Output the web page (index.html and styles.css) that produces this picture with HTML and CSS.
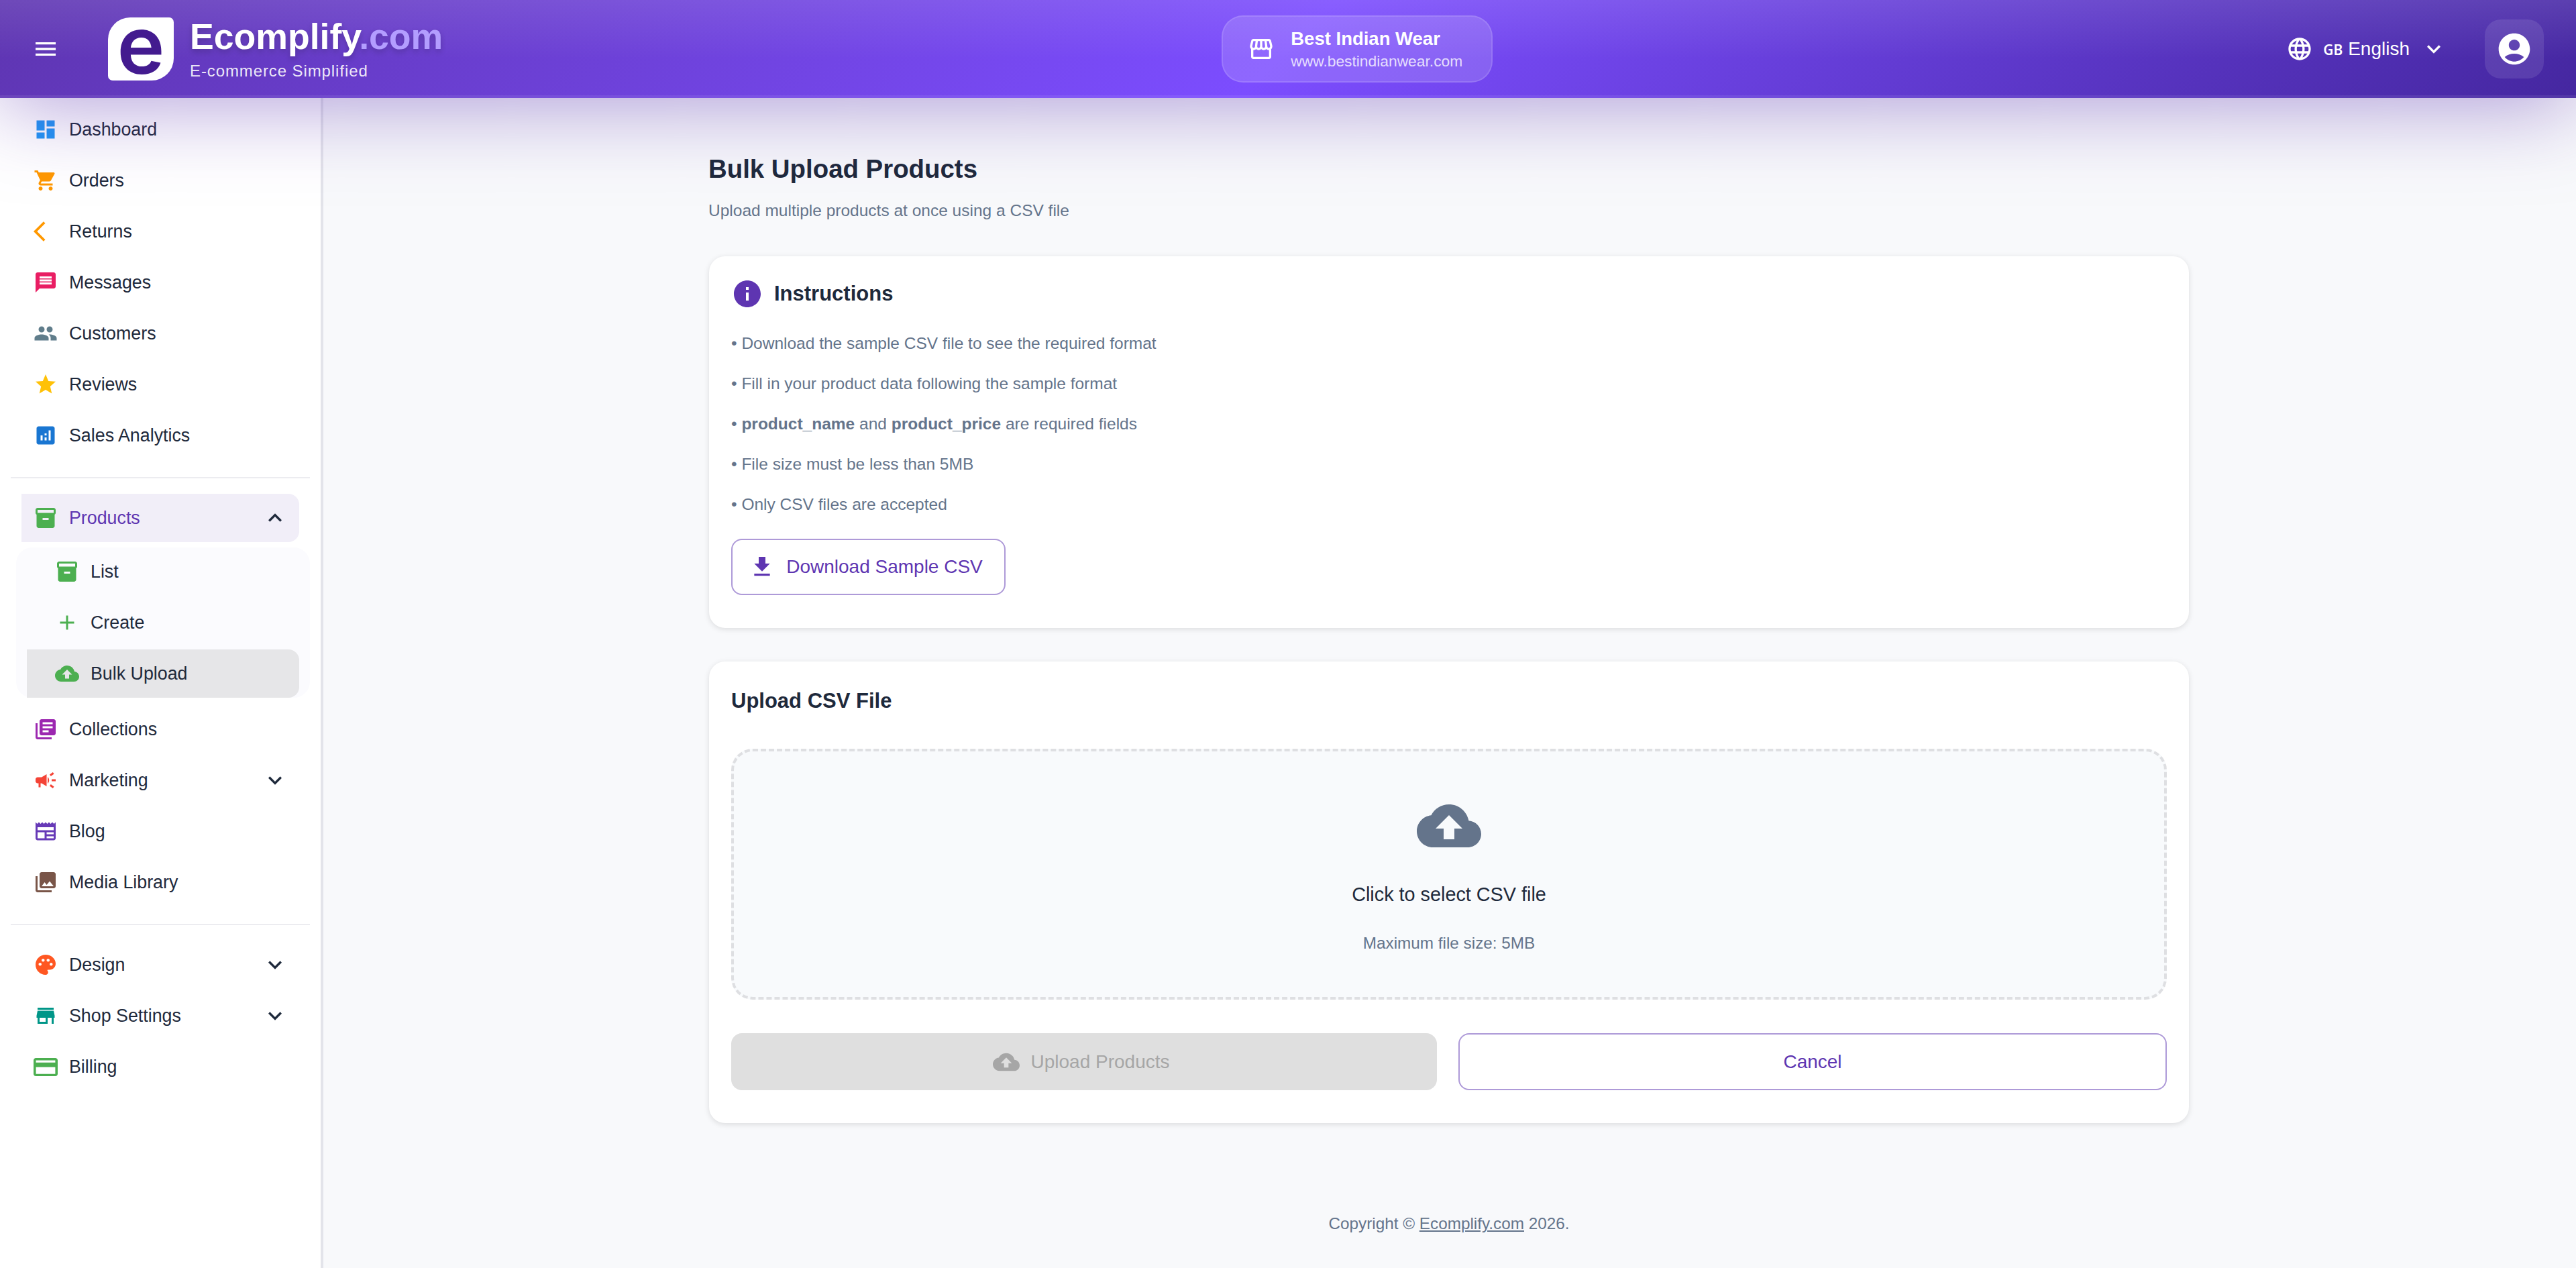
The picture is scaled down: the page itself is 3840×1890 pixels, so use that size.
FILE: index.html
```html
<!DOCTYPE html>
<html lang="en">
<head>
  <meta charset="UTF-8">
  <title>Bulk Upload Products</title>
  <link rel="stylesheet" href="styles.css">
</head>
<body>
  <header class="topbar">
    <div class="brand">
      <svg class="icon menu-btn" viewBox="0 0 24 24"><path d="M3 18h18v-2H3v2zm0-5h18v-2H3v2zm0-7v2h18V6H3z"/></svg>
      <div class="logo"><span class="logo-letter">e</span></div>
      <div class="brand-text">
        <div class="brand-name">Ecomplify<span class="brand-tld">.com</span></div>
        <div class="brand-tag">E-commerce Simplified</div>
      </div>
    </div>

    <div class="shop-pill">
      <svg class="icon" viewBox="0 0 24 24"><path d="M21.9 8.89l-1.05-4.37c-.22-.9-1-1.52-1.91-1.52H5.05c-.9 0-1.69.63-1.9 1.52L2.1 8.89c-.24 1.02-.02 2.06.62 2.88.08.11.19.19.28.29V19c0 1.1.9 2 2 2h14c1.1 0 2-.9 2-2v-6.94c.09-.09.2-.18.28-.28.64-.82.87-1.87.62-2.89zm-2.99-3.9 1.05 4.37c.1.42.01.84-.25 1.17-.14.18-.44.47-.94.47-.61 0-1.14-.49-1.21-1.14L16.98 5l1.93-.01zM13 5h1.96l.54 4.52c.05.39-.07.78-.33 1.07-.22.26-.54.41-.95.41-.67 0-1.22-.59-1.22-1.31V5zM8.49 9.52 9.04 5H11v4.69c0 .72-.55 1.31-1.29 1.31-.34 0-.65-.15-.89-.41-.25-.29-.37-.68-.33-1.07zm-4.45-.16L5.05 5h1.97l-.58 4.86c-.08.65-.6 1.14-1.21 1.14-.49 0-.8-.29-.93-.47-.27-.32-.36-.75-.26-1.17zM5 19v-6.03c.08.01.15.03.23.03.87 0 1.66-.36 2.24-.95.6.6 1.4.95 2.31.95.87 0 1.65-.36 2.23-.93.59.57 1.39.93 2.29.93.84 0 1.64-.35 2.24-.95.58.59 1.37.95 2.24.95.08 0 .15-.02.23-.03V19H5z"/></svg>
      <div>
        <div class="shop-name">Best Indian Wear</div>
        <div class="shop-url">www.bestindianwear.com</div>
      </div>
    </div>

    <div class="top-actions">
      <svg class="icon" viewBox="0 0 24 24"><path d="M11.99 2C6.47 2 2 6.48 2 12s4.47 10 9.99 10C17.52 22 22 17.52 22 12S17.52 2 11.99 2zm6.93 6h-2.95c-.32-1.25-.78-2.45-1.38-3.56 1.84.63 3.37 1.91 4.33 3.56zM12 4.04c.83 1.2 1.48 2.53 1.91 3.96h-3.82c.43-1.43 1.08-2.76 1.91-3.96zM4.26 14C4.1 13.36 4 12.69 4 12s.1-1.36.26-2h3.38c-.08.66-.14 1.32-.14 2 0 .68.06 1.34.14 2H4.26zm.82 2h2.95c.32 1.25.78 2.45 1.38 3.56-1.84-.63-3.37-1.9-4.33-3.56zm2.95-8H5.08c.96-1.66 2.49-2.93 4.33-3.56C8.81 5.55 8.35 6.75 8.03 8zM12 19.96c-.83-1.2-1.48-2.53-1.91-3.96h3.82c-.43 1.43-1.08 2.76-1.91 3.96zM14.34 14H9.66c-.09-.66-.16-1.32-.16-2 0-.68.07-1.35.16-2h4.68c.09.65.16 1.32.16 2 0 .68-.07 1.34-.16 2zm.25 5.56c.6-1.11 1.06-2.31 1.38-3.56h2.95c-.96 1.65-2.49 2.93-4.33 3.56zM16.36 14c.08-.66.14-1.32.14-2 0-.68-.06-1.34-.14-2h3.38c.16.64.26 1.31.26 2s-.1 1.36-.26 2h-3.38z"/></svg>
      <div class="lang"><span class="lang-code">GB</span> English</div>
      <svg class="icon" viewBox="0 0 24 24"><path d="M16.59 8.59 12 13.17 7.41 8.59 6 10l6 6 6-6z"/></svg>
      <div class="avatar">
        <svg class="avatar-icon" viewBox="0 0 24 24"><path d="M12 2C6.48 2 2 6.48 2 12s4.48 10 10 10 10-4.48 10-10S17.52 2 12 2zm0 4c1.93 0 3.5 1.57 3.5 3.5S13.93 13 12 13s-3.5-1.57-3.5-3.5S10.07 6 12 6zm0 14c-2.03 0-4.43-.82-6.14-2.88C7.55 15.8 9.68 15 12 15s4.45.8 6.14 2.12C16.43 19.18 14.03 20 12 20z"/></svg>
      </div>
    </div>
  </header>

  <div class="layout">
    <nav class="sidebar">
      <div class="nav-group">
        <a class="nav-item"><svg class="nav-icon c-blue" viewBox="0 0 24 24"><path d="M3 13h8V3H3v10zm0 8h8v-6H3v6zm10 0h8V11h-8v10zm0-18v6h8V3h-8z"/></svg>Dashboard</a>
        <a class="nav-item"><svg class="nav-icon c-orange" viewBox="0 0 24 24"><path d="M7 18c-1.1 0-1.99.9-1.99 2S5.9 22 7 22s2-.9 2-2-.9-2-2-2zM1 2v2h2l3.6 7.59-1.35 2.45c-.16.28-.25.61-.25.96 0 1.1.9 2 2 2h12v-2H7.42c-.14 0-.25-.11-.25-.25l.03-.12.9-1.63h7.45c.75 0 1.41-.41 1.75-1.03l3.58-6.47c.08-.14.12-.31.12-.48 0-.55-.45-1-1-1H5.21l-.94-2H1zm16 16c-1.1 0-1.99.9-1.99 2s.89 2 1.99 2 2-.9 2-2-.9-2-2-2z"/></svg>Orders</a>
        <a class="nav-item"><svg class="nav-icon c-orange" viewBox="0 0 24 24"><path d="M11.67 3.87 9.9 2.1 0 12l9.9 9.9 1.77-1.77L3.54 12z"/></svg>Returns</a>
        <a class="nav-item"><svg class="nav-icon c-pink" viewBox="0 0 24 24"><path d="M20 2H4c-1.1 0-1.99.9-1.99 2L2 22l4-4h14c1.1 0 2-.9 2-2V4c0-1.1-.9-2-2-2zm-2 12H6v-2h12v2zm0-3H6V9h12v2zm0-3H6V6h12v2z"/></svg>Messages</a>
        <a class="nav-item"><svg class="nav-icon c-slate" viewBox="0 0 24 24"><path d="M16 11c1.66 0 2.99-1.34 2.99-3S17.66 5 16 5c-1.66 0-3 1.34-3 3s1.34 3 3 3zm-8 0c1.66 0 2.99-1.34 2.99-3S9.66 5 8 5C6.34 5 5 6.34 5 8s1.34 3 3 3zm0 2c-2.33 0-7 1.17-7 3.5V19h14v-2.5c0-2.33-4.67-3.5-7-3.5zm8 0c-.29 0-.62.02-.97.05 1.16.84 1.97 1.97 1.97 3.45V19h6v-2.5c0-2.33-4.67-3.5-7-3.5z"/></svg>Customers</a>
        <a class="nav-item"><svg class="nav-icon c-amber" viewBox="0 0 24 24"><path d="M12 17.27 18.18 21l-1.64-7.03L22 9.24l-7.19-.61L12 2 9.19 8.63 2 9.24l5.46 4.73L5.82 21z"/></svg>Reviews</a>
        <a class="nav-item"><svg class="nav-icon c-navy" viewBox="0 0 24 24"><path d="M19 3H5c-1.1 0-2 .9-2 2v14c0 1.1.9 2 2 2h14c1.1 0 2-.9 2-2V5c0-1.1-.9-2-2-2zM9 17H7v-5h2v5zm4 0h-2v-3h2v3zm0-5h-2v-2h2v2zm4 5h-2V7h2v10z"/></svg>Sales Analytics</a>
      </div>

      <div class="nav-divider"></div>

      <div class="nav-group">
        <a class="nav-item nav-open"><svg class="nav-icon c-green" viewBox="0 0 24 24"><path d="M20 2H4c-1 0-2 .9-2 2v3.01c0 .72.43 1.34 1 1.69V20c0 1.1 1.1 2 2 2h14c.9 0 2-.9 2-2V8.7c.57-.35 1-.97 1-1.69V4c0-1.1-1-2-2-2zm-5 12H9v-2h6v2zm5-7H4V4l16-.02V7z"/></svg>Products<svg class="nav-caret" viewBox="0 0 24 24"><path d="m12 8-6 6 1.41 1.41L12 10.83l4.59 4.58L18 14z"/></svg></a>
        <div class="submenu">
          <a class="nav-item sub-item"><svg class="nav-icon c-green" viewBox="0 0 24 24"><path d="M20 2H4c-1 0-2 .9-2 2v3.01c0 .72.43 1.34 1 1.69V20c0 1.1 1.1 2 2 2h14c.9 0 2-.9 2-2V8.7c.57-.35 1-.97 1-1.69V4c0-1.1-1-2-2-2zm-5 12H9v-2h6v2zm5-7H4V4l16-.02V7z"/></svg>List</a>
          <a class="nav-item sub-item"><svg class="nav-icon c-green" viewBox="0 0 24 24"><path d="M19 13h-6v6h-2v-6H5v-2h6V5h2v6h6v2z"/></svg>Create</a>
          <a class="nav-item sub-item sub-active"><svg class="nav-icon c-green" viewBox="0 0 24 24"><path d="M19.35 10.04C18.67 6.59 15.64 4 12 4 9.11 4 6.6 5.64 5.35 8.04 2.34 8.36 0 10.91 0 14c0 3.31 2.69 6 6 6h13c2.76 0 5-2.24 5-5 0-2.64-2.05-4.78-4.65-4.96zM14 13v4h-4v-4H7l5-5 5 5h-3z"/></svg>Bulk Upload</a>
        </div>
        <a class="nav-item"><svg class="nav-icon c-purple" viewBox="0 0 24 24"><path d="M4 6H2v14c0 1.1.9 2 2 2h14v-2H4V6zm16-4H8c-1.1 0-2 .9-2 2v12c0 1.1.9 2 2 2h12c1.1 0 2-.9 2-2V4c0-1.1-.9-2-2-2zm-1 9H9V9h10v2zm-4 4H9v-2h6v2zm4-8H9V5h10v2z"/></svg>Collections</a>
        <a class="nav-item"><svg class="nav-icon c-red" viewBox="0 0 24 24"><path d="M18 11v2h4v-2h-4zm-2 6.61c.96.71 2.21 1.65 3.2 2.39.4-.53.8-1.07 1.2-1.6-.99-.74-2.24-1.68-3.2-2.4-.4.54-.8 1.08-1.2 1.61zM20.4 5.6c-.4-.53-.8-1.07-1.2-1.6-.99.74-2.24 1.68-3.2 2.4.4.53.8 1.07 1.2 1.6.96-.72 2.21-1.65 3.2-2.4zM4 9c-1.1 0-2 .9-2 2v2c0 1.1.9 2 2 2h1v4h2v-4h1l5 3V6L8 9H4zm11.5 3c0-1.33-.58-2.53-1.5-3.35v6.69c.92-.81 1.5-2.01 1.5-3.34z"/></svg>Marketing<svg class="nav-caret" viewBox="0 0 24 24"><path d="M16.59 8.59 12 13.17 7.41 8.59 6 10l6 6 6-6z"/></svg></a>
        <a class="nav-item"><svg class="nav-icon c-violet" viewBox="0 0 24 24"><path d="M22 3l-1.67 1.67L18.67 3 17 4.67 15.33 3l-1.66 1.67L12 3l-1.67 1.67L8.67 3 7 4.67 5.33 3 3.67 4.67 2 3v16c0 1.1.9 2 2 2h16c1.1 0 2-.9 2-2V3zM11 19H4v-6h7v6zm9 0h-7v-2h7v2zm0-4h-7v-2h7v2zm0-4H4V8h16v3z"/></svg>Blog</a>
        <a class="nav-item"><svg class="nav-icon c-brown" viewBox="0 0 24 24"><path d="M22 16V4c0-1.1-.9-2-2-2H8c-1.1 0-2 .9-2 2v12c0 1.1.9 2 2 2h12c1.1 0 2-.9 2-2zm-11-4 2.03 2.71L16 11l4 5H8l3-4zM2 6v14c0 1.1.9 2 2 2h14v-2H4V6H2z"/></svg>Media Library</a>
      </div>

      <div class="nav-divider"></div>

      <div class="nav-group">
        <a class="nav-item"><svg class="nav-icon c-deep-orange" viewBox="0 0 24 24"><path d="M12 2C6.49 2 2 6.49 2 12s4.49 10 10 10c1.38 0 2.5-1.12 2.5-2.5 0-.61-.23-1.2-.64-1.67-.08-.1-.13-.21-.13-.33 0-.28.22-.5.5-.5H16c3.31 0 6-2.69 6-6 0-4.96-4.49-9-10-9zm5.5 11c-.83 0-1.5-.67-1.5-1.5s.67-1.5 1.5-1.5 1.5.67 1.5 1.5-.67 1.5-1.5 1.5zm-3-4c-.83 0-1.5-.67-1.5-1.5S13.67 6 14.5 6s1.5.67 1.5 1.5S15.33 9 14.5 9zM5 11.5c0-.83.67-1.5 1.5-1.5s1.5.67 1.5 1.5S7.33 13 6.5 13 5 12.33 5 11.5zm6-4c0 .83-.67 1.5-1.5 1.5S8 8.33 8 7.5 8.67 6 9.5 6s1.5.67 1.5 1.5z"/></svg>Design<svg class="nav-caret" viewBox="0 0 24 24"><path d="M16.59 8.59 12 13.17 7.41 8.59 6 10l6 6 6-6z"/></svg></a>
        <a class="nav-item"><svg class="nav-icon c-teal" viewBox="0 0 24 24"><path d="M20 4H4v2h16V4zm1 10v-2l-1-5H4l-1 5v2h1v6h10v-6h4v6h2v-6h1zm-9 4H6v-4h6v4z"/></svg>Shop Settings<svg class="nav-caret" viewBox="0 0 24 24"><path d="M16.59 8.59 12 13.17 7.41 8.59 6 10l6 6 6-6z"/></svg></a>
        <a class="nav-item"><svg class="nav-icon nav-icon-card c-green" viewBox="2 4 20 16" preserveAspectRatio="none"><path d="M20 4H4c-1.11 0-1.99.89-1.99 2L2 18c0 1.11.89 2 2 2h16c1.11 0 2-.89 2-2V6c0-1.11-.89-2-2-2zm0 14H4v-6h16v6zm0-10H4V6h16v2z"/></svg>Billing</a>
      </div>
    </nav>

    <main class="main">
      <div class="content">
        <h1 class="page-title">Bulk Upload Products</h1>
        <p class="page-sub">Upload multiple products at once using a CSV file</p>

        <section class="card">
          <div class="card-head">
            <svg class="info-icon" viewBox="0 0 24 24"><path d="M12 2C6.48 2 2 6.48 2 12s4.48 10 10 10 10-4.48 10-10S17.52 2 12 2zm1 15h-2v-6h2v6zm0-8h-2V7h2v2z"/></svg>
            <h2 class="card-title">Instructions</h2>
          </div>
          <p class="step">• Download the sample CSV file to see the required format</p>
          <p class="step">• Fill in your product data following the sample format</p>
          <p class="step">• <strong>product_name</strong> and <strong>product_price</strong> are required fields</p>
          <p class="step">• File size must be less than 5MB</p>
          <p class="step">• Only CSV files are accepted</p>
          <button class="btn btn-outline btn-download">
            <svg class="btn-icon" viewBox="0 0 24 24"><path d="M5 20h14v-2H5v2zM19 9h-4V3H9v6H5l7 7 7-7z"/></svg>
            Download Sample CSV
          </button>
        </section>

        <section class="card upload-card">
          <h2 class="card-title upload-title">Upload CSV File</h2>
          <div class="dropzone">
            <svg class="drop-icon" viewBox="0 0 24 24"><path d="M19.35 10.04C18.67 6.59 15.64 4 12 4 9.11 4 6.6 5.64 5.35 8.04 2.34 8.36 0 10.91 0 14c0 3.31 2.69 6 6 6h13c2.76 0 5-2.24 5-5 0-2.64-2.05-4.78-4.65-4.96zM14 13v4h-4v-4H7l5-5 5 5h-3z"/></svg>
            <div class="drop-main">Click to select CSV file</div>
            <div class="drop-hint">Maximum file size: 5MB</div>
          </div>
          <div class="actions">
            <button class="btn btn-disabled">
              <svg class="btn-icon" viewBox="0 0 24 24"><path d="M19.35 10.04C18.67 6.59 15.64 4 12 4 9.11 4 6.6 5.64 5.35 8.04 2.34 8.36 0 10.91 0 14c0 3.31 2.69 6 6 6h13c2.76 0 5-2.24 5-5 0-2.64-2.05-4.78-4.65-4.96zM14 13v4h-4v-4H7l5-5 5 5h-3z"/></svg>
              Upload Products
            </button>
            <button class="btn btn-outline">Cancel</button>
          </div>
        </section>

        <footer class="footer">Copyright © <u>Ecomplify.com</u> 2026.</footer>
      </div>
    </main>
  </div>
</body>
</html>
```

FILE: styles.css
```css
* {
  box-sizing: border-box;
}

body {
  margin: 0;
  height: 1890px;
  display: flex;
  flex-direction: column;
  overflow: hidden;
  font-family: "Liberation Sans", Arial, sans-serif;
  color: #1e293b;
  background: #f8f9fb;
}

/* top bar */
.topbar {
  position: relative;
  z-index: 2;
  flex: none;
  height: 146px;
  padding: 0 48px;
  display: flex;
  align-items: center;
  justify-content: space-between;
  color: #fff;
  background-color: #5e35b1;
  background-image:
    linear-gradient(180deg, rgba(255, 255, 255, 0.1), rgba(255, 255, 255, 0) 60%),
    linear-gradient(135deg, #5e35b1 0%, #7c4dff 50%, #4527a0 100%);
  box-shadow: inset 0 -4px 0 rgba(255, 255, 255, 0.08), 0 8px 128px rgba(94, 53, 177, 0.5);
}

.icon {
  width: 40px;
  height: 40px;
  flex: none;
  fill: #fff;
}

.brand {
  display: flex;
  align-items: center;
}

.menu-btn {
  margin-right: 73px;
}

.logo {
  width: 98px;
  height: 94px;
  margin-right: 24px;
  padding-bottom: 13px;
  display: flex;
  align-items: center;
  justify-content: center;
  background: #fff;
  border-radius: 33px 7px 33px 7px;
}

.logo-letter {
  font-family: Inter, "Liberation Sans", sans-serif;
  font-size: 120px;
  font-weight: 600;
  line-height: 1;
  color: #431b8f;
}

.brand-text {
  margin-top: -4px;
}

.brand-name {
  font-size: 53.6px;
  font-weight: 700;
  line-height: 62px;
  text-shadow: 0 4px 8px rgba(0, 0, 0, 0.2);
}

.brand-tld {
  color: #b39dff;
}

.brand-tag {
  margin-top: 7px;
  font-size: 24px;
  line-height: 28px;
  letter-spacing: 0.9px;
  color: rgba(255, 255, 255, 0.9);
}

.shop-pill {
  width: 404px;
  height: 100px;
  margin-left: -22px;
  padding-left: 37px;
  display: flex;
  align-items: center;
  gap: 24px;
  background: rgba(255, 255, 255, 0.15);
  border: 2px solid rgba(255, 255, 255, 0.12);
  border-radius: 32px;
}

.shop-name {
  font-size: 27.5px;
  font-weight: 700;
  line-height: 32px;
}

.shop-url {
  margin-top: 3px;
  font-size: 22.8px;
  line-height: 28px;
  color: rgba(255, 255, 255, 0.8);
}

.top-actions {
  display: flex;
  align-items: center;
}

.lang {
  margin-left: 15px;
  margin-right: 16px;
  font-size: 28px;
  line-height: 40px;
}

.lang-code {
  font-family: "Noto Sans", sans-serif;
  font-size: 21px;
  font-weight: 600;
}

.avatar {
  width: 88px;
  height: 88px;
  margin-left: 56px;
  display: flex;
  align-items: center;
  justify-content: center;
  background: rgba(255, 255, 255, 0.1);
  border-radius: 24px;
}

.avatar-icon {
  width: 56px;
  height: 56px;
  fill: #fff;
}

.layout {
  flex: 1;
  display: flex;
  min-height: 0;
}

/* sidebar */
.sidebar {
  flex: none;
  width: 482px;
  padding-top: 7px;
  background: #fff;
  border-right: 4px solid #e3e4ea;
}

.nav-group {
  padding: 0 32px;
}

.nav-item {
  height: 72px;
  margin: 4px 0;
  padding-left: 18px;
  display: flex;
  align-items: center;
  gap: 17px;
  font-size: 26.8px;
  color: #1e293b;
}

.nav-icon {
  width: 36px;
  height: 36px;
  flex: none;
  fill: currentColor;
}

.nav-icon-card {
  height: 27px;
}

.nav-caret {
  width: 40px;
  height: 40px;
  margin-left: auto;
  margin-right: 16px;
  fill: #1e293b;
}

.nav-open {
  color: #5e35b1;
  background: #f1eef8;
  border-radius: 0 16px 16px 0;
}

.submenu {
  margin: 8px -16px 11px -8px;
  padding: 0 16px;
  background: #fbfbfe;
  border-radius: 24px;
}

.sub-item {
  padding-left: 42px;
}

.sub-active {
  margin-bottom: 0;
  background: #e6e6e8;
  border-radius: 0 16px 16px 0;
}

.nav-divider {
  height: 2px;
  margin: 26px 16px 23px;
  background: #ececf0;
}

.c-blue { color: #2196f3; }
.c-orange { color: #ff9800; }
.c-pink { color: #e91e63; }
.c-slate { color: #607d8b; }
.c-amber { color: #ffc107; }
.c-navy { color: #1976d2; }
.c-green { color: #4caf50; }
.c-purple { color: #9c27b0; }
.c-red { color: #f44336; }
.c-violet { color: #673ab7; }
.c-brown { color: #795548; }
.c-deep-orange { color: #ff5722; }
.c-teal { color: #009688; }

/* main column */
.main {
  flex: 1;
  min-width: 0;
  padding-right: 2px;
}

.content {
  width: 2206px;
  margin: 0 auto;
  padding-top: 83px;
}

.page-title {
  margin: 0 0 0 -1px;
  font-size: 38.4px;
  font-weight: 700;
  line-height: 46px;
}

.page-sub {
  margin: 25px 0 54px -1px;
  font-size: 24.5px;
  line-height: 28px;
  color: #64748b;
}

.card {
  margin-bottom: 50px;
  padding: 32px 33px 49px 33px;
  background: #fff;
  border-radius: 24px;
  box-shadow: 0 2px 8px rgba(0, 0, 0, 0.12);
}

.card-head {
  height: 48px;
  margin-bottom: 36px;
  display: flex;
  align-items: center;
  gap: 16px;
}

.info-icon {
  width: 48px;
  height: 48px;
  flex: none;
  fill: #5e35b1;
}

.card-title {
  margin: 0;
  font-size: 31px;
  font-weight: 700;
  line-height: 40px;
}

.step {
  margin: 0 0 32px;
  font-size: 24.5px;
  line-height: 28px;
  color: #64748b;
}

.btn {
  height: 84px;
  display: flex;
  align-items: center;
  justify-content: center;
  font-family: inherit;
  font-size: 28px;
  border-radius: 16px;
}

.btn-icon {
  width: 40px;
  height: 40px;
  margin-left: -8px;
  margin-right: 16px;
  fill: currentColor;
}

.btn-outline {
  color: #5e35b1;
  background: #fff;
  border: 2px solid #ae9ad8;
}

.btn-download {
  width: 409px;
  margin-top: 37px;
}

.upload-card {
  padding-top: 39px;
}

.upload-title {
  margin-bottom: 51px;
}

.dropzone {
  height: 374px;
  padding-top: 63px;
  display: flex;
  flex-direction: column;
  align-items: center;
  background: #f8fafc;
  border: 4px dashed #dedfe2;
  border-radius: 32px;
}

.drop-icon {
  width: 96px;
  height: 96px;
  margin-bottom: 34px;
  fill: #64748b;
}

.drop-main {
  font-size: 28.8px;
  line-height: 40px;
}

.drop-hint {
  margin-top: 35px;
  font-size: 24.3px;
  line-height: 36px;
  color: #64748b;
}

.actions {
  margin-top: 50px;
  display: flex;
  gap: 32px;
}

.actions .btn {
  flex: 1;
  height: 85px;
}

.btn-disabled {
  color: #a6a6a6;
  background: #dfdfdf;
  border: 0;
}

.footer {
  margin-top: 132px;
  text-align: center;
  font-size: 24.3px;
  line-height: 36px;
  color: #64748b;
}
```
